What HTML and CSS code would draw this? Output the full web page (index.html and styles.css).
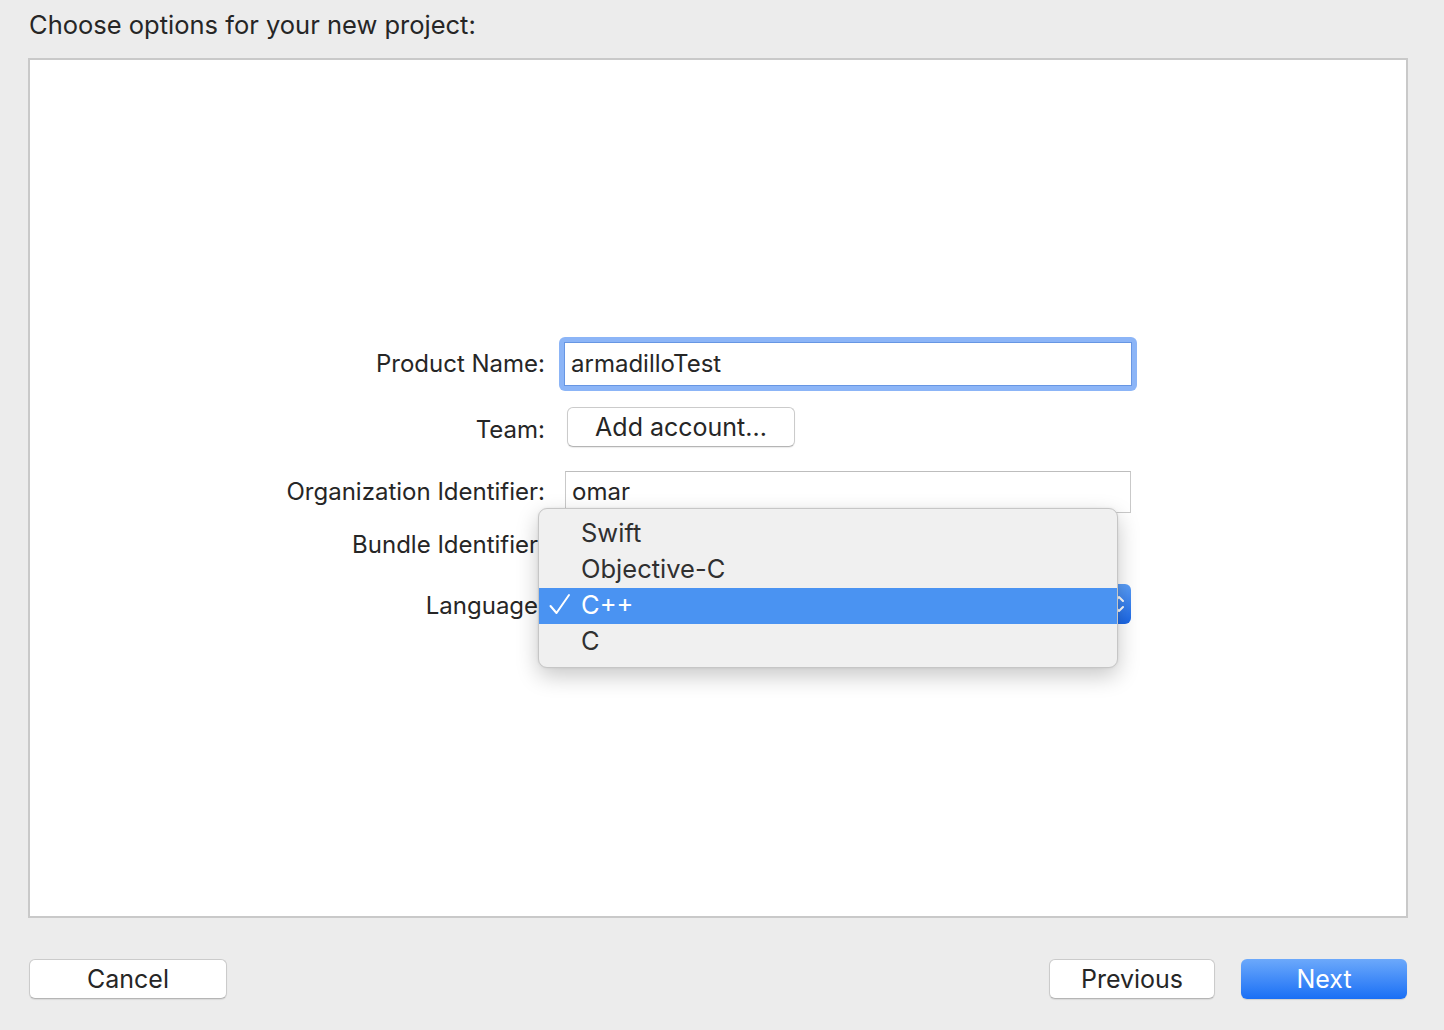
FILE: index.html
```html
<!DOCTYPE html>
<html>
<head>
<meta charset="utf-8">
<link rel="stylesheet" href="styles.css">
</head>
<body>
<div class="window">
  <div class="title">Choose options for your new project:</div>
  <div class="panel">
    <div class="form">
      <div class="row row-name">
        <div class="label">Product Name:</div>
        <div class="ctl">
          <div class="focus-ring"><div class="field focused">armadilloTest</div></div>
        </div>
      </div>
      <div class="row row-team">
        <div class="label">Team:</div>
        <div class="ctl"><div class="btn btn-add">Add account...</div></div>
      </div>
      <div class="row row-org">
        <div class="label">Organization Identifier:</div>
        <div class="ctl"><div class="field plain">omar</div></div>
      </div>
      <div class="row row-bundle">
        <div class="label">Bundle Identifier:</div>
        <div class="ctl"></div>
      </div>
      <div class="row row-lang">
        <div class="label">Language:</div>
        <div class="ctl">
          <div class="popup">
            <svg class="chev" width="12" height="22" viewBox="0 0 12 22"><path d="M2 8 L6 4 L10 8 M2 14 L6 18 L10 14" fill="none" stroke="#fff" stroke-width="2" stroke-linecap="round" stroke-linejoin="round"/></svg>
          </div>
          <div class="menu">
            <div class="item"><span class="check"></span>Swift</div>
            <div class="item"><span class="check"></span>Objective-C</div>
            <div class="item selected"><span class="check"><svg width="24" height="24" viewBox="0 0 24 24"><path d="M2.5 13 L8.5 20 L21 2" fill="none" stroke="#fff" stroke-width="2" stroke-linecap="round" stroke-linejoin="round"/></svg></span>C++</div>
            <div class="item"><span class="check"></span>C</div>
          </div>
        </div>
      </div>
    </div>
  </div>
  <div class="footer">
    <div class="btn btn-cancel">Cancel</div>
    <div class="right">
      <div class="btn btn-prev">Previous</div>
      <div class="btn btn-next">Next</div>
    </div>
  </div>
</div>
</body>
</html>
```

FILE: styles.css
```css
html, body {
  margin: 0;
  padding: 0;
}
body {
  background: #ececec;
  font-family: "Inter", "Roboto", "Liberation Sans", sans-serif;
  color: #262626;
  font-size: 24px;
  width: 1444px;
  height: 1030px;
  overflow: hidden;
}
.window {
  display: flex;
  flex-direction: column;
}
.title {
  height: 58px;
  box-sizing: border-box;
  padding: 10px 0 0 29px;
  font-size: 25.5px;
  line-height: 30px;
}
.panel {
  margin-left: 28px;
  width: 1380px;
  height: 860px;
  box-sizing: border-box;
  background: #ffffff;
  border: 2px solid #c9c9c9;
  padding-top: 277px;
}
.form {
  display: flex;
  flex-direction: column;
}
.row {
  display: flex;
  align-items: center;
}
.label {
  width: 515px;
  flex: none;
  text-align: right;
  line-height: 28px;
  font-size: 24px;
}
.ctl {
  margin-left: 14px;
  position: relative;
  display: flex;
  align-items: center;
}
.row-name { height: 54px; }
.row-team { height: 40px; margin-top: 16px; }
.row-team .label { padding-top: 5px; }
.row-org { height: 42px; margin-top: 24px; }
.row-bundle { height: 40px; margin-top: 12px; }
.row-lang { height: 40px; margin-top: 19px; }
.row-lang .label { padding-top: 3px; }

.focus-ring {
  width: 578px;
  height: 54px;
  box-sizing: border-box;
  padding: 5px;
  border-radius: 6px;
  background: #8cb5f7;
}
.field {
  box-sizing: border-box;
  background: #fff;
  padding-left: 6px;
  display: flex;
  align-items: center;
  font-size: 24px;
}
.field.focused {
  height: 44px;
  border: 1px solid #6796e3;
  padding-bottom: 2px;
}
.field.plain {
  margin-left: 6px;
  width: 566px;
  height: 42px;
  border: 1px solid #c9c9c9;
  border-top-color: #bdbdbd;
  padding-bottom: 1px;
}
.btn {
  box-sizing: border-box;
  height: 40px;
  display: flex;
  align-items: center;
  justify-content: center;
  background: #ffffff;
  border: 1px solid #cbcbcb;
  border-bottom-color: #b5b5b5;
  border-radius: 6px;
  box-shadow: 0 1px 1px rgba(0,0,0,0.08);
  font-size: 25px;
  color: #262626;
}
.btn-add {
  margin-left: 8px;
  width: 228px;
  height: 40px;
  padding-bottom: 1px;
}
.popup {
  margin-left: 6px;
  width: 566px;
  height: 40px;
  box-sizing: border-box;
  border-radius: 6px;
  background: linear-gradient(#5a9ef8, #1b67e6);
  display: flex;
  align-items: center;
  justify-content: flex-end;
  padding: 0 6px 0 12px;
}
.chev { display: block; }
.menu {
  position: absolute;
  left: -21px;
  top: -76px;
  width: 580px;
  height: 160px;
  box-sizing: border-box;
  padding-top: 7px;
  background: #f0f0f0;
  border: 1px solid #c6c6c6;
  border-radius: 9px;
  box-shadow: 0 8px 22px rgba(0,0,0,0.22), 0 0 3px rgba(0,0,0,0.08);
  overflow: hidden;
  z-index: 5;
}
.item {
  height: 36px;
  box-sizing: border-box;
  padding-bottom: 3px;
  display: flex;
  align-items: center;
  font-size: 25.5px;
  color: #303030;
}
.item.selected {
  background: #4a93f2;
  color: #ffffff;
}
.check {
  width: 42px;
  flex: none;
  display: flex;
  align-items: center;
  padding-left: 9px;
  box-sizing: border-box;
}
.check svg { display: block; }
.footer {
  display: flex;
  justify-content: space-between;
  padding: 41px 37px 0 29px;
}
.btn-cancel { width: 198px; }
.right {
  display: flex;
  gap: 26px;
}
.btn-prev { width: 166px; }
.btn-next {
  width: 166px;
  color: #ffffff;
  border: none;
  background: linear-gradient(#6ca9fb, #1a6ff5);
  box-shadow: 0 1px 1px rgba(0,0,0,0.12);
}
```
